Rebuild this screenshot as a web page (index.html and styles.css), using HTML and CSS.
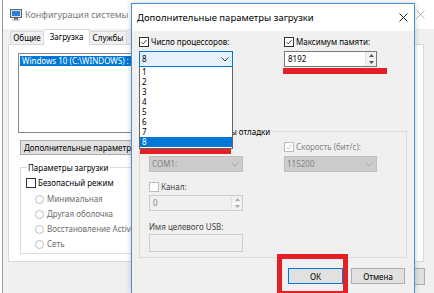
FILE: index.html
```html
<!DOCTYPE html>
<html lang="ru">
<head>
  <meta charset="UTF-8">
  <link rel="stylesheet" href="styles.css">
  <title>Дополнительные параметры загрузки</title>
</head>
<body>
  <!-- окно "Конфигурация системы" на заднем плане -->
  <div class="window back">
    <div class="titlebar">
      <svg class="app-icon" viewBox="0 0 12 12">
        <rect x="0.5" y="0.5" width="11" height="8" fill="#d8dde3" stroke="#5b6470"/>
        <rect x="2" y="2" width="8" height="5" fill="#2d7fd3"/>
        <rect x="4" y="9" width="4" height="1.5" fill="#5b6470"/>
        <rect x="2.5" y="10.5" width="7" height="1" fill="#8a929c"/>
      </svg>
      <span class="title">Конфигурация системы</span>
      <span class="close">
        <svg width="9" height="9" viewBox="0 0 9 9"><path d="M0.5 0.5L8.5 8.5M8.5 0.5L0.5 8.5" stroke="#b4b4b4" stroke-width="1"/></svg>
      </span>
    </div>
    <div class="tabs">
      <div class="tab t1">Общие</div>
      <div class="tab t2 active">Загрузка</div>
      <div class="tab t3">Службы</div>
    </div>
    <div class="tabpage">
      <div class="oslist">
        <div class="os sel">Windows 10 (C:\WINDOWS) :</div>
      </div>
      <div class="btn-row">
        <button class="btn wide">Дополнительные параметр</button>
      </div>
      <div class="group boot">
        <span class="group-title">Параметры загрузки</span>
        <label class="chk"><span class="box"></span>Безопасный режим</label>
        <div class="radios">
          <label class="radio"><span class="dot"></span>Минимальная</label>
          <label class="radio"><span class="dot"></span>Другая оболочка</label>
          <label class="radio"><span class="dot"></span>Восстановление Active</label>
          <label class="radio"><span class="dot"></span>Сеть</label>
        </div>
      </div>
    </div>
    <div class="back-buttons">
      <button class="btn"></button>
    </div>
  </div>

  <!-- диалог поверх -->
  <div class="window dialog">
    <div class="titlebar">
      <span class="title">Дополнительные параметры загрузки</span>
      <span class="close">
        <svg width="9" height="9" viewBox="0 0 9 9"><path d="M0.5 0.5L8.5 8.5M8.5 0.5L0.5 8.5" stroke="#222" stroke-width="1"/></svg>
      </span>
    </div>
    <div class="dbody">
      <div class="top">
        <label class="chk"><span class="box on"><svg viewBox="0 0 10 10"><path d="M1.8 5.2L4 7.4L8.4 2.4" fill="none" stroke="#222" stroke-width="1"/></svg></span>Число процессоров:</label>
        <label class="chk"><span class="box on"><svg viewBox="0 0 10 10"><path d="M1.8 5.2L4 7.4L8.4 2.4" fill="none" stroke="#222" stroke-width="1"/></svg></span>Максимум памяти:</label>

        <div class="combo-wrap">
          <div class="combo open">
            <span>8</span>
            <svg class="chev" width="8" height="5" viewBox="0 0 8 5"><path d="M0.5 0.5L4 4L7.5 0.5" fill="none" stroke="#333"/></svg>
          </div>
          <div class="droplist">
            <div class="item">1</div>
            <div class="item">2</div>
            <div class="item">3</div>
            <div class="item">4</div>
            <div class="item">5</div>
            <div class="item">6</div>
            <div class="item">7</div>
            <div class="item hl">8</div>
          </div>
          <div class="mark mark-list"></div>
        </div>

        <div class="combo-wrap">
          <div class="spin">
            <span class="spin-val">8192</span>
            <span class="spin-btns">
              <span class="arr"><svg width="5" height="3" viewBox="0 0 5 3"><path d="M0 3L2.5 0L5 3Z" fill="#555"/></svg></span>
              <span class="arr"><svg width="5" height="3" viewBox="0 0 5 3"><path d="M0 0L2.5 3L5 0Z" fill="#555"/></svg></span>
            </span>
          </div>
          <div class="mark mark-mem"></div>
        </div>
      </div>

      <!-- флажки "Блокировка PCI" и "Отладка" закрыты списком -->
      <div class="more"></div>

      <div class="group debug">
        <span class="group-title">Глобальные параметры отладки</span>
        <div class="g-grid">
          <label class="chk dis"><span class="box"></span>Порт отладки:</label>
          <label class="chk dis"><span class="box on"><svg viewBox="0 0 10 10"><path d="M1.8 5.2L4 7.4L8.4 2.4" fill="none" stroke="#bcbcbc" stroke-width="1"/></svg></span>Скорость (бит/с):</label>
          <div class="combo dis">
            <span>COM1:</span>
            <svg class="chev" width="8" height="5" viewBox="0 0 8 5"><path d="M0.5 0.5L4 4L7.5 0.5" fill="none" stroke="#a8a8a8"/></svg>
          </div>
          <div class="combo dis">
            <span>115200</span>
            <svg class="chev" width="8" height="5" viewBox="0 0 8 5"><path d="M0.5 0.5L4 4L7.5 0.5" fill="none" stroke="#a8a8a8"/></svg>
          </div>
        </div>
        <label class="chk channel"><span class="box dim"></span>Канал:</label>
        <div class="spin dis">
          <span class="spin-val">0</span>
          <span class="spin-btns">
            <span class="arr"><svg width="5" height="3" viewBox="0 0 5 3"><path d="M0 3L2.5 0L5 3Z" fill="#aaa"/></svg></span>
            <span class="arr"><svg width="5" height="3" viewBox="0 0 5 3"><path d="M0 0L2.5 3L5 0Z" fill="#aaa"/></svg></span>
          </span>
        </div>
        <div class="lbl">Имя целевого USB:</div>
        <div class="field"></div>
      </div>

      <div class="buttons">
        <div class="ok-wrap">
          <button class="btn default">ОК</button>
          <div class="mark mark-ok"></div>
        </div>
        <button class="btn">Отмена</button>
      </div>
    </div>
  </div>
</body>
</html>
```

FILE: styles.css
```css
* {
  box-sizing: border-box;
}

body {
  margin: 0;
  width: 434px;
  height: 293px;
  overflow: hidden;
  position: relative;
  background: #fff;
  font-family: "Noto Sans", "Segoe UI", sans-serif;
  font-size: 8px;
  line-height: 10px;
  color: #000;
}

.window {
  position: absolute;
  background: #f0f0f0;
}

.titlebar {
  display: flex;
  align-items: center;
  background: #fff;
}

.title {
  flex: 1;
  font-size: 9.5px;
  white-space: nowrap;
}

.close {
  display: flex;
  justify-content: center;
}

/* задний план */
.back {
  left: 2px;
  top: 0;
  width: 436px;
  height: 300px;
  border-left: 1px solid #9a9a9a;
}

.back .titlebar {
  height: 29px;
  padding-left: 7px;
}

.back .title {
  font-size: 9px;
  color: #7a7a7a;
}

.back .close {
  width: 36px;
}

.app-icon {
  width: 12px;
  height: 12px;
  margin-right: 3px;
}

.tabs {
  display: flex;
  align-items: flex-end;
  height: 15px;
  padding-left: 7px;
}

.tab {
  height: 13px;
  border: 1px solid #d9d9d9;
  border-bottom: none;
  background: #f0f0f0;
  text-align: center;
  line-height: 12px;
  white-space: nowrap;
}

.tab.active {
  height: 16px;
  margin-bottom: -1px;
  background: #fff;
  border-left: none;
  position: relative;
  z-index: 1;
  line-height: 14px;
}

.active + .tab {
  border-left: none;
}

.t1 { width: 34px; }
.t2 { width: 46px; }
.t3 { width: 37px; }

.tabpage {
  margin-left: 5px;
  width: 416px;
  height: 218px;
  background: #fff;
  border: 1px solid #d9d9d9;
  padding: 8px 8px 0 9px;
}

.oslist {
  height: 80px;
  border: 1px solid #828790;
  padding: 2px 1px;
}

.os {
  height: 10px;
  padding-left: 2px;
  white-space: nowrap;
}

.os.sel {
  background: #0078d7;
  color: #fff;
}

.btn-row {
  margin-top: 7px;
  padding-left: 2px;
}

.btn {
  height: 16px;
  padding: 0 3px;
  background: #e1e1e1;
  border: 1px solid #adadad;
  font: inherit;
  line-height: 13px;
  color: #000;
  white-space: nowrap;
}

.btn.wide {
  width: 150px;
  height: 15px;
  text-align: left;
}

.group {
  border: 1px solid #dcdcdc;
  display: flex;
  flex-direction: column;
  align-items: flex-start;
}

.group-title {
  margin: -6px 0 0 -2px;
  padding: 0 1px;
  height: 11px;
  line-height: 11px;
  background: inherit;
  white-space: nowrap;
}

.boot {
  margin: 12px 0 0 2px;
  width: 200px;
  height: 87px;
  padding-left: 5px;
  background: #fff;
}

.boot .group-title {
  margin-left: 1px;
}

.boot .chk {
  margin-top: 5px;
}

.radios {
  display: flex;
  flex-direction: column;
  gap: 5px;
  margin-top: 6px;
  padding-left: 9px;
}

.radio {
  display: flex;
  align-items: center;
  height: 10px;
  color: #6d6d6d;
  white-space: nowrap;
}

.dot {
  width: 9px;
  height: 9px;
  border: 1px solid #bcbcbc;
  border-radius: 50%;
  background: #fff;
  margin-right: 3px;
  flex: none;
}

.back-buttons {
  display: flex;
  justify-content: flex-end;
  padding-right: 13px;
  margin-top: 6px;
}

.back-buttons .btn {
  width: 70px;
  height: 17px;
}

/* флажки */
.chk {
  display: flex;
  align-items: center;
  height: 10px;
  white-space: nowrap;
}

.box {
  width: 10px;
  height: 10px;
  border: 1px solid #333;
  background: #fff;
  margin-right: 2px;
  flex: none;
  display: flex;
}

.box svg {
  width: 8px;
  height: 8px;
}

.chk.dis {
  color: #838383;
}

.chk.dis .box,
.box.dim {
  border-color: #bcbcbc;
}

/* диалог */
.dialog {
  left: 131px;
  top: 3px;
  width: 284px;
  height: 291px;
  border: 1px solid #4a8ed3;
  box-shadow: 0 0 6px rgba(0, 0, 0, 0.2);
  z-index: 5;
}

.dialog .titlebar {
  height: 27px;
  padding-left: 5px;
}

.dialog .close {
  width: 22px;
}

.dbody {
  padding: 6px 0 0 7px;
}

.top {
  display: grid;
  grid-template-columns: 94px 93px;
  column-gap: 51px;
  row-gap: 4px;
}

.combo-wrap {
  position: relative;
  z-index: 2;
}

.combo {
  height: 16px;
  display: flex;
  align-items: center;
  justify-content: space-between;
  padding: 0 3px 0 2px;
  border: 1px solid #7a7a7a;
  background: #fff;
}

.combo.open {
  background: #e5f1fb;
  border-color: #0078d7;
}

.combo.dis {
  background: #cccccc;
  border-color: #bfbfbf;
  color: #838383;
}

.droplist {
  position: absolute;
  top: 100%;
  left: 0;
  right: 0;
  border: 1px solid #646464;
  border-top: none;
  background: #fff;
  padding: 0 0 1px;
}

.item {
  height: 10px;
  padding-left: 2px;
}

.item.hl {
  background: #0078d7;
  color: #fff;
}

.spin {
  height: 16px;
  display: flex;
  align-items: stretch;
  border: 1px solid #7a7a7a;
  background: #fff;
}

.spin-val {
  flex: 1;
  padding-left: 3px;
  line-height: 14px;
}

.spin-btns {
  width: 11px;
  display: flex;
  flex-direction: column;
  border-left: 1px solid #e3e3e3;
}

.arr {
  flex: 1;
  display: flex;
  align-items: center;
  justify-content: center;
  background: #f0f0f0;
}

.arr + .arr {
  border-top: 1px solid #fff;
}

.spin.dis {
  width: 94px;
  background: #f0f0f0;
  border-color: #cccccc;
  color: #838383;
}

/* красные пометки */
.mark {
  position: absolute;
  z-index: 3;
}

.mark-list {
  left: 1px;
  top: 98px;
  width: 91px;
  height: 5px;
  background: #e41f26;
}

.mark-mem {
  left: -1px;
  top: 17px;
  width: 104px;
  height: 6px;
  background: #e41f26;
}

.more {
  height: 64px;
}

.debug {
  width: 268px;
  height: 127px;
  padding-left: 9px;
  background: #f0f0f0;
}

.debug .group-title {
  margin-left: -6px;
}

.g-grid {
  display: grid;
  grid-template-columns: 94px 93px;
  column-gap: 41px;
  row-gap: 4px;
  margin-top: 5px;
}

.channel {
  margin-top: 10px;
  color: #444;
}

.debug .spin {
  margin-top: 3px;
}

.lbl {
  margin-top: 11px;
  color: #444;
}

.field {
  margin-top: 2px;
  width: 94px;
  height: 18px;
  border: 1px solid #cccccc;
  background: #f0f0f0;
}

.buttons {
  display: flex;
  justify-content: flex-end;
  gap: 8px;
  margin-top: 10px;
  padding-right: 9px;
}

.buttons .btn {
  width: 54px;
  text-align: center;
}

.ok-wrap {
  position: relative;
}

.buttons .btn.default {
  width: 55px;
  border-color: #0078d7;
}

.mark-ok {
  left: -11px;
  top: -14px;
  width: 71px;
  height: 42px;
  border: 5px solid #e41f26;
}
```
